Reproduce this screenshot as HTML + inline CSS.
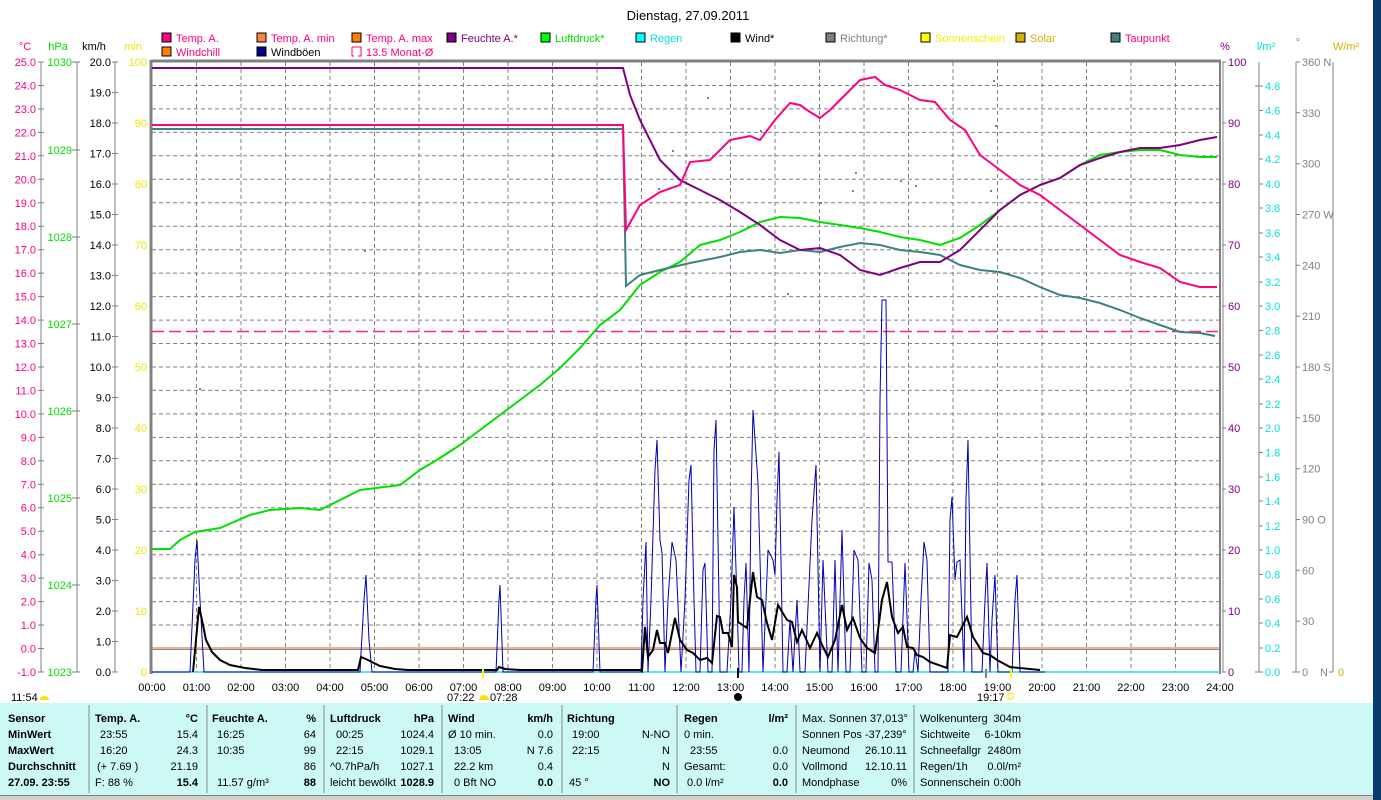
<!DOCTYPE html>
<html><head><meta charset="utf-8"><style>
html,body{margin:0;padding:0;width:1381px;height:800px;overflow:hidden;background:#fff}
svg{display:block;font-family:"Liberation Sans",sans-serif;font-size:11px}
</style></head><body>
<svg width="1381" height="800" viewBox="0 0 1381 800" xmlns="http://www.w3.org/2000/svg">
<rect x="0" y="0" width="1381" height="800" fill="#fff"/>
<rect x="1373" y="0" width="8" height="800" fill="#0b3a6e"/>
<text x="688" y="20" text-anchor="middle" font-size="13" fill="#000">Dienstag, 27.09.2011</text>

<g font-size="11">
<rect x="162" y="33" width="9" height="9" fill="#ff0080" stroke="#000"/><text x="176" y="42" fill="#ff0080">Temp. A.</text>
<rect x="257" y="33" width="9" height="9" fill="#ff8040" stroke="#000"/><text x="271" y="42" fill="#ff0080">Temp. A. min</text>
<rect x="352" y="33" width="9" height="9" fill="#ff8000" stroke="#000"/><text x="366" y="42" fill="#ff0080">Temp. A. max</text>
<rect x="447" y="33" width="9" height="9" fill="#800080" stroke="#000"/><text x="461" y="42" fill="#800080">Feuchte A.*</text>
<rect x="541" y="33" width="9" height="9" fill="#00ff00" stroke="#000"/><text x="555" y="42" fill="#00dd00">Luftdruck*</text>
<rect x="636" y="33" width="9" height="9" fill="#00ffff" stroke="#000"/><text x="650" y="42" fill="#00e0e0">Regen</text>
<rect x="731" y="33" width="9" height="9" fill="#000" stroke="#000"/><text x="745" y="42" fill="#000">Wind*</text>
<rect x="826" y="33" width="9" height="9" fill="#808080" stroke="#000"/><text x="840" y="42" fill="#808080">Richtung*</text>
<rect x="921" y="33" width="9" height="9" fill="#ffff00" stroke="#000"/><text x="935" y="42" fill="#f0f000">Sonnenschein</text>
<rect x="1016" y="33" width="9" height="9" fill="#d4b000" stroke="#000"/><text x="1030" y="42" fill="#d4b000">Solar</text>
<rect x="1111" y="33" width="9" height="9" fill="#408080" stroke="#000"/><text x="1125" y="42" fill="#ff0080">Taupunkt</text>
<rect x="162" y="47" width="9" height="9" fill="#ff8000" stroke="#000"/><text x="176" y="56" fill="#ff0080">Windchill</text>
<rect x="257" y="47" width="9" height="9" fill="#000090" stroke="#000"/><text x="271" y="56" fill="#000">Windböen</text>
<path d="M352 47h9v9h-3" fill="none" stroke="#ff0080"/><path d="M352 47v9h2" fill="none" stroke="#ff0080"/><text x="366" y="56" fill="#ff0080">13.5 Monat-Ø</text>
</g>

<text x="25" y="50" text-anchor="middle" fill="#ff0080">°C</text>
<text x="58" y="50" text-anchor="middle" fill="#00dd00">hPa</text>
<text x="94" y="50" text-anchor="middle" fill="#000">km/h</text>
<text x="133" y="50" text-anchor="middle" fill="#e8e800">min</text>
<text x="1225" y="50" text-anchor="middle" fill="#800080">%</text>
<text x="1266" y="50" text-anchor="middle" fill="#00e0e0">l/m²</text>
<text x="1298" y="46" text-anchor="middle" fill="#808080">°</text>
<text x="1346" y="50" text-anchor="middle" fill="#d4b000">W/m²</text>

<g stroke="#808080" stroke-width="1" fill="none">
<line x1="41" y1="62" x2="41" y2="672"/>
<line x1="77" y1="62" x2="77" y2="672"/>
<line x1="115" y1="62" x2="115" y2="672"/>
<line x1="1259" y1="62" x2="1259" y2="672"/>
<line x1="1296" y1="62" x2="1296" y2="672"/>
<line x1="1333" y1="62" x2="1333" y2="672"/>
</g>

<g stroke="#808080" stroke-dasharray="4,3" stroke-width="1">
<line x1="152" y1="85.5" x2="1220" y2="85.5"/><line x1="152" y1="108.9" x2="1220" y2="108.9"/><line x1="152" y1="132.4" x2="1220" y2="132.4"/><line x1="152" y1="155.8" x2="1220" y2="155.8"/><line x1="152" y1="179.3" x2="1220" y2="179.3"/><line x1="152" y1="202.8" x2="1220" y2="202.8"/><line x1="152" y1="226.2" x2="1220" y2="226.2"/><line x1="152" y1="249.7" x2="1220" y2="249.7"/><line x1="152" y1="273.1" x2="1220" y2="273.1"/><line x1="152" y1="296.6" x2="1220" y2="296.6"/><line x1="152" y1="320.1" x2="1220" y2="320.1"/><line x1="152" y1="343.5" x2="1220" y2="343.5"/><line x1="152" y1="367" x2="1220" y2="367"/><line x1="152" y1="390.4" x2="1220" y2="390.4"/><line x1="152" y1="413.9" x2="1220" y2="413.9"/><line x1="152" y1="437.4" x2="1220" y2="437.4"/><line x1="152" y1="460.8" x2="1220" y2="460.8"/><line x1="152" y1="484.3" x2="1220" y2="484.3"/><line x1="152" y1="507.7" x2="1220" y2="507.7"/><line x1="152" y1="531.2" x2="1220" y2="531.2"/><line x1="152" y1="554.7" x2="1220" y2="554.7"/><line x1="152" y1="578.1" x2="1220" y2="578.1"/><line x1="152" y1="601.6" x2="1220" y2="601.6"/><line x1="152" y1="625" x2="1220" y2="625"/>
<line x1="196.5" y1="62" x2="196.5" y2="672"/><line x1="241" y1="62" x2="241" y2="672"/><line x1="285.5" y1="62" x2="285.5" y2="672"/><line x1="330" y1="62" x2="330" y2="672"/><line x1="374.5" y1="62" x2="374.5" y2="672"/><line x1="419" y1="62" x2="419" y2="672"/><line x1="463.5" y1="62" x2="463.5" y2="672"/><line x1="508" y1="62" x2="508" y2="672"/><line x1="552.5" y1="62" x2="552.5" y2="672"/><line x1="597" y1="62" x2="597" y2="672"/><line x1="641.5" y1="62" x2="641.5" y2="672"/><line x1="686" y1="62" x2="686" y2="672"/><line x1="730.5" y1="62" x2="730.5" y2="672"/><line x1="775" y1="62" x2="775" y2="672"/><line x1="819.5" y1="62" x2="819.5" y2="672"/><line x1="864" y1="62" x2="864" y2="672"/><line x1="908.5" y1="62" x2="908.5" y2="672"/><line x1="953" y1="62" x2="953" y2="672"/><line x1="997.5" y1="62" x2="997.5" y2="672"/><line x1="1042" y1="62" x2="1042" y2="672"/><line x1="1086.5" y1="62" x2="1086.5" y2="672"/><line x1="1131" y1="62" x2="1131" y2="672"/><line x1="1175.5" y1="62" x2="1175.5" y2="672"/>
</g>

<g fill="#ff0080" text-anchor="end">
<text x="36" y="66">25.0</text><text x="36" y="89.5">24.0</text><text x="36" y="113">23.0</text><text x="36" y="136.4">22.0</text><text x="36" y="160">21.0</text><text x="36" y="183.3">20.0</text><text x="36" y="206.8">19.0</text><text x="36" y="230.2">18.0</text><text x="36" y="253.7">17.0</text><text x="36" y="277.1">16.0</text><text x="36" y="300.6">15.0</text><text x="36" y="324.1">14.0</text><text x="36" y="347.5">13.0</text><text x="36" y="371">12.0</text><text x="36" y="394.4">11.0</text><text x="36" y="418">10.0</text><text x="36" y="441.4">9.0</text><text x="36" y="464.8">8.0</text><text x="36" y="488.3">7.0</text><text x="36" y="511.7">6.0</text><text x="36" y="535.2">5.0</text><text x="36" y="558.7">4.0</text><text x="36" y="582.1">3.0</text><text x="36" y="605.6">2.0</text><text x="36" y="629">1.0</text><text x="36" y="652.5">0.0</text><text x="36" y="676">-1.0</text>
</g>
<g stroke="#808080"><path d="M38 62h6M38 85.5h6M38 109h6M38 132.4h6M38 155.8h6M38 179.3h6M38 202.8h6M38 226.2h6M38 249.7h6M38 273.1h6M38 296.6h6M38 320.1h6M38 343.5h6M38 367h6M38 390.4h6M38 413.9h6M38 437.4h6M38 460.8h6M38 484.3h6M38 507.7h6M38 531.2h6M38 554.7h6M38 578.1h6M38 601.6h6M38 625h6M38 648.5h6M38 672h6"/>
<path d="M72 62h8M72 150h8M72 237h8M72 324h8M72 411h8M72 498h8M72 585h8M72 672h8"/>
<path d="M112 62h6M112 92.5h6M112 123h6M112 153.5h6M112 184h6M112 214.5h6M112 245h6M112 275.5h6M112 306h6M112 336.5h6M112 367h6M112 397.5h6M112 428h6M112 458.5h6M112 489h6M112 519.5h6M112 550h6M112 580.5h6M112 611h6M112 641.5h6M112 672h6"/>
<path d="M1222 62h4M1222 123h4M1222 184h4M1222 245h4M1222 306h4M1222 367h4M1222 428h4M1222 489h4M1222 550h4M1222 611h4M1222 672h4"/>
<path d="M1255 86h8M1259 110.5h4M1259 135h4M1259 159h4M1259 184h4M1259 208h4M1259 233h4M1259 257h4M1259 282h4M1259 306h4M1259 330.5h4M1259 355h4M1259 379h4M1259 404h4M1259 428h4M1259 452.5h4M1259 477h4M1259 501h4M1259 526h4M1259 550h4M1259 574.5h4M1259 599h4M1259 623h4M1259 648h4M1255 672h8"/>
<path d="M1296 62h4M1296 112.8h4M1296 163.7h4M1296 214.5h4M1296 265.3h4M1296 316.2h4M1296 367h4M1296 417.8h4M1296 468.7h4M1296 519.5h4M1296 570.3h4M1296 621.2h4M1292 672h8M1329 672h4"/>
</g>
<g fill="#00dd00" text-anchor="end">
<text x="72" y="66">1030</text><text x="72" y="154">1029</text><text x="72" y="241">1028</text><text x="72" y="328">1027</text><text x="72" y="415">1026</text><text x="72" y="502">1025</text><text x="72" y="589">1024</text><text x="72" y="676">1023</text>
</g>
<g fill="#000" text-anchor="end">
<text x="111" y="66">20.0</text><text x="111" y="96.5">19.0</text><text x="111" y="127">18.0</text><text x="111" y="157.5">17.0</text><text x="111" y="188">16.0</text><text x="111" y="218.5">15.0</text><text x="111" y="249">14.0</text><text x="111" y="279.5">13.0</text><text x="111" y="310">12.0</text><text x="111" y="340.5">11.0</text><text x="111" y="371">10.0</text><text x="111" y="401.5">9.0</text><text x="111" y="432">8.0</text><text x="111" y="462.5">7.0</text><text x="111" y="493">6.0</text><text x="111" y="523.5">5.0</text><text x="111" y="554">4.0</text><text x="111" y="584.5">3.0</text><text x="111" y="615">2.0</text><text x="111" y="645.5">1.0</text><text x="111" y="676">0.0</text>
</g>
<g fill="#e8e800" text-anchor="end">
<text x="147" y="66">100</text><text x="147" y="127">90</text><text x="147" y="188">80</text><text x="147" y="249">70</text><text x="147" y="310">60</text><text x="147" y="371">50</text><text x="147" y="432">40</text><text x="147" y="493">30</text><text x="147" y="554">20</text><text x="147" y="615">10</text><text x="147" y="676">0</text>
</g>
<g fill="#800080">
<text x="1228" y="66">100</text><text x="1228" y="127">90</text><text x="1228" y="188">80</text><text x="1228" y="249">70</text><text x="1228" y="310">60</text><text x="1228" y="371">50</text><text x="1228" y="432">40</text><text x="1228" y="493">30</text><text x="1228" y="554">20</text><text x="1228" y="615">10</text><text x="1228" y="676">0</text>
</g>
<g fill="#00e0e0">
<text x="1265" y="90">4.8</text><text x="1265" y="114.5">4.6</text><text x="1265" y="139">4.4</text><text x="1265" y="163">4.2</text><text x="1265" y="188">4.0</text><text x="1265" y="212">3.8</text><text x="1265" y="237">3.6</text><text x="1265" y="261">3.4</text><text x="1265" y="286">3.2</text><text x="1265" y="310">3.0</text><text x="1265" y="334.5">2.8</text><text x="1265" y="359">2.6</text><text x="1265" y="383">2.4</text><text x="1265" y="408">2.2</text><text x="1265" y="432">2.0</text><text x="1265" y="456.5">1.8</text><text x="1265" y="481">1.6</text><text x="1265" y="505">1.4</text><text x="1265" y="530">1.2</text><text x="1265" y="554">1.0</text><text x="1265" y="578.5">0.8</text><text x="1265" y="603">0.6</text><text x="1265" y="627">0.4</text><text x="1265" y="652">0.2</text><text x="1265" y="676">0.0</text>
</g>
<g fill="#808080">
<text x="1302" y="66">360 N</text><text x="1302" y="116.8">330</text><text x="1302" y="167.7">300</text><text x="1302" y="218.5">270 W</text><text x="1302" y="269.3">240</text><text x="1302" y="320.2">210</text><text x="1302" y="371">180 S</text><text x="1302" y="421.8">150</text><text x="1302" y="472.7">120</text><text x="1302" y="523.5">90  O</text><text x="1302" y="574.3">60</text><text x="1302" y="625.2">30</text><text x="1302" y="676">0</text><text x="1320" y="676">N</text>
</g>
<text x="1338" y="676" fill="#d4b000">0</text>

<line x1="151" y1="61" x2="1221" y2="61" stroke="#808080" stroke-width="3"/>
<line x1="151" y1="60" x2="151" y2="674" stroke="#808080" stroke-width="3"/>
<line x1="1220" y1="60" x2="1220" y2="674" stroke="#808080" stroke-width="2"/>
<line x1="1223" y1="62" x2="1223" y2="672" stroke="#808080" stroke-width="1"/>
<line x1="152" y1="648" x2="1220" y2="648" stroke="#808080" stroke-width="1"/>
<line x1="152" y1="649.5" x2="1220" y2="649.5" stroke="#e07020" stroke-width="1"/>
<line x1="152" y1="672" x2="1220" y2="672" stroke="#20e0e0" stroke-width="1.5"/>
<line x1="152" y1="331.5" x2="1220" y2="331.5" stroke="#ff2090" stroke-width="1.5" stroke-dasharray="12,5"/>

<g fill="#808080">
<rect x="364" y="250" width="2" height="2"/><rect x="199" y="388" width="2" height="2"/><rect x="672" y="150" width="2" height="2"/><rect x="760" y="130" width="2" height="2"/><rect x="852" y="190" width="2" height="2"/><rect x="855" y="172" width="2" height="2"/><rect x="900" y="180" width="2" height="2"/><rect x="915" y="185" width="2" height="2"/><rect x="993" y="80" width="2" height="2"/><rect x="995" y="125" width="2" height="2"/><rect x="787" y="293" width="2" height="2"/><rect x="990" y="190" width="2" height="2"/><rect x="707" y="97" width="2" height="2"/><rect x="658" y="188" width="2" height="2"/><rect x="820" y="202" width="2" height="2"/>
</g>

<polyline fill="none" stroke="#0000b0" stroke-width="1" points="152,672 190,672 195,560 197,540 200,600 204,672 360,672 364,600 366,575 369,640 372,672 496,672 499,600 500,585 503,672 593,672 596,600 597,585 600,672 641,672 643,600 646,542 648,672 651,600 655,470 657,440 660,540 662,553 665,672 668,600 672,542 676,560 681,672 685,600 689,480 691,465 694,600 696,672 700,672 703,570 705,563 708,672 712,672 714,450 716,420 719,600 720,672 724,672 727,672 731,600 734,507 737,600 739,672 742,672 744,600 746,563 749,672 751,500 753,410 758,483 763,672 766,600 768,550 773,560 775,575 777,500 779,452 783,672 787,672 790,620 793,672 797,600 800,672 805,672 812,520 816,465 820,672 823,560 828,672 832,672 835,560 838,672 842,530 846,672 850,672 854,550 858,560 862,672 866,672 869,563 872,580 875,672 878,672 880,400 882,300 886,300 888,562 892,562 896,672 901,672 905,563 909,672 913,672 915,650 918,672 921,600 924,542 927,560 930,672 936,672 942,672 948,672 950,520 952,497 955,580 957,562 960,560 964,672 966,500 968,440 972,672 976,672 982,672 985,600 987,563 990,672 992,620 995,575 998,672 1012,672 1015,600 1017,575 1020,672 1045,672"/>

<polyline fill="none" stroke="#000" stroke-width="2" points="193,672 196,640 199,607 202,620 206,640 212,652 220,660 230,665 245,668 262,670 358,670 361,657 368,660 380,666 395,669 408,670 497,670 499,667 505,669 520,670 641,670 642,671 645,627 648,657 653,650 657,630 660,643 665,643 668,653 675,618 680,640 687,650 693,653 700,660 707,658 712,663 717,616 720,617 723,633 728,633 732,647 734,575 737,587 738,622 747,628 753,572 757,597 762,600 767,623 772,640 778,605 787,620 792,622 797,642 802,630 810,648 817,633 823,647 828,657 835,640 842,605 847,630 853,618 860,638 867,648 875,653 882,600 887,582 892,617 898,633 903,627 907,647 913,648 917,655 923,657 930,662 947,668 950,635 957,637 967,617 973,637 983,653 990,655 997,660 1010,667 1040,670"/>

<polyline fill="none" stroke="#00e000" stroke-width="2" points="152,549 170,549 180,540 195,532 220,528 250,515 270,510 300,508 320,510 340,500 360,490 400,485 420,470 440,458 460,445 480,430 500,415 520,400 540,385 560,368 580,348 600,325 620,310 640,285 660,272 680,262 700,245 720,240 740,232 760,222 780,217 800,218 820,222 840,225 860,228 880,232 900,237 920,240 940,245 960,238 980,225 1000,210 1020,195 1040,185 1060,178 1080,165 1100,155 1120,152 1140,150 1160,150 1180,155 1200,157 1217,157"/>

<polyline fill="none" stroke="#408080" stroke-width="2" points="152,129 623,129 626,286 640,275 660,270 690,263 720,257 740,252 760,250 780,253 800,250 820,252 840,247 860,243 880,245 900,250 920,252 940,255 960,265 980,270 1000,272 1020,278 1040,287 1060,295 1080,298 1100,303 1120,310 1140,318 1160,325 1180,332 1200,333 1215,336"/>

<polyline fill="none" stroke="#800080" stroke-width="2" points="152,68 623,68 630,95 640,120 660,160 680,180 700,190 720,200 740,212 760,225 780,240 800,250 820,248 840,255 860,270 880,275 900,268 920,262 940,262 960,250 980,230 1000,210 1020,195 1040,185 1060,178 1080,165 1100,158 1120,152 1140,148 1160,148 1180,145 1200,140 1217,137"/>

<polyline fill="none" stroke="#ff0080" stroke-width="2" points="152,125 623,125 626,230 640,205 660,192 680,185 690,162 710,160 730,140 750,136 760,140 775,120 790,103 800,105 810,112 820,118 830,110 840,100 860,80 875,77 885,85 900,90 920,100 935,102 950,120 965,130 980,155 1000,170 1020,185 1040,195 1060,210 1080,225 1100,240 1120,255 1140,262 1160,268 1180,282 1200,287 1217,287"/>

<rect x="482" y="669" width="2" height="9" fill="#ffff00"/>
<rect x="737" y="668" width="2" height="10" fill="#000"/>
<rect x="985" y="669" width="2" height="9" fill="#808080"/>
<rect x="1010" y="669" width="2" height="9" fill="#ffff00"/>

<g fill="#000" text-anchor="middle">
<text x="152" y="691">00:00</text><text x="196.5" y="691">01:00</text><text x="241" y="691">02:00</text><text x="285.5" y="691">03:00</text><text x="330" y="691">04:00</text><text x="374.5" y="691">05:00</text><text x="419" y="691">06:00</text><text x="463.5" y="691">07:00</text><text x="508" y="691">08:00</text><text x="552.5" y="691">09:00</text><text x="597" y="691">10:00</text><text x="641.5" y="691">11:00</text><text x="686" y="691">12:00</text><text x="730.5" y="691">13:00</text><text x="775" y="691">14:00</text><text x="819.5" y="691">15:00</text><text x="864" y="691">16:00</text><text x="908.5" y="691">17:00</text><text x="953" y="691">18:00</text><text x="997.5" y="691">19:00</text><text x="1042" y="691">20:00</text><text x="1086.5" y="691">21:00</text><text x="1131" y="691">22:00</text><text x="1175.5" y="691">23:00</text><text x="1220" y="691">24:00</text>
</g>
<text x="447" y="701" fill="#000">07:22</text><text x="490" y="701" fill="#000">07:28</text>
<path d="M479 700 a5 5 0 0 1 10 0z" fill="#ffe000"/>
<text x="977" y="701" fill="#000">19:17</text><rect x="1008" y="693" width="5" height="6" fill="none" stroke="#ffe000"/>
<circle cx="738" cy="697" r="4" fill="#000"/>
<text x="11" y="701" fill="#000">11:54</text><path d="M40 700 a4.5 4 0 0 1 9 0z" fill="#ffe000"/>

<rect x="0" y="703" width="1373" height="92" fill="#ccf8f6"/>
<rect x="0" y="795" width="1373" height="5" fill="#d4d0c8"/>
<line x1="0" y1="795.5" x2="1373" y2="795.5" stroke="#808080"/>
<g stroke="#8a8a8a"><line x1="89" y1="705" x2="89" y2="793"/><line x1="207" y1="705" x2="207" y2="793"/><line x1="324" y1="705" x2="324" y2="793"/><line x1="442" y1="705" x2="442" y2="793"/><line x1="562" y1="705" x2="562" y2="793"/><line x1="677" y1="705" x2="677" y2="793"/><line x1="796" y1="705" x2="796" y2="793"/><line x1="914" y1="705" x2="914" y2="793"/></g>
<g fill="#000" font-size="11">
<g font-weight="bold"><text x="8" y="722">Sensor</text><text x="8" y="738">MinWert</text><text x="8" y="754">MaxWert</text><text x="8" y="770">Durchschnitt</text><text x="8" y="786">27.09. 23:55</text>
<text x="95" y="722">Temp. A.</text><text x="198" y="722" text-anchor="end">°C</text>
<text x="212" y="722">Feuchte A.</text><text x="316" y="722" text-anchor="end">%</text>
<text x="330" y="722">Luftdruck</text><text x="434" y="722" text-anchor="end">hPa</text>
<text x="448" y="722">Wind</text><text x="553" y="722" text-anchor="end">km/h</text>
<text x="567" y="722">Richtung</text>
<text x="684" y="722">Regen</text><text x="788" y="722" text-anchor="end">l/m²</text>
<text x="198" y="786" text-anchor="end">15.4</text><text x="316" y="786" text-anchor="end">88</text><text x="434" y="786" text-anchor="end">1028.9</text><text x="553" y="786" text-anchor="end">0.0</text><text x="670" y="786" text-anchor="end">NO</text><text x="788" y="786" text-anchor="end">0.0</text></g>
<text x="100" y="738">23:55</text><text x="198" y="738" text-anchor="end">15.4</text>
<text x="100" y="754">16:20</text><text x="198" y="754" text-anchor="end">24.3</text>
<text x="97" y="770">(+ 7.69 )</text><text x="198" y="770" text-anchor="end">21.19</text>
<text x="95" y="786">F: 88 %</text>
<text x="217" y="738">16:25</text><text x="316" y="738" text-anchor="end">64</text>
<text x="217" y="754">10:35</text><text x="316" y="754" text-anchor="end">99</text>
<text x="316" y="770" text-anchor="end">86</text>
<text x="217" y="786">11.57 g/m³</text>
<text x="336" y="738">00:25</text><text x="434" y="738" text-anchor="end">1024.4</text>
<text x="336" y="754">22:15</text><text x="434" y="754" text-anchor="end">1029.1</text>
<text x="330" y="770">^0.7hPa/h</text><text x="434" y="770" text-anchor="end">1027.1</text>
<text x="330" y="786">leicht bewölkt</text>
<text x="448" y="738">Ø 10 min.</text><text x="553" y="738" text-anchor="end">0.0</text>
<text x="454" y="754">13:05</text><text x="553" y="754" text-anchor="end">N 7.6</text>
<text x="454" y="770">22.2 km</text><text x="553" y="770" text-anchor="end">0.4</text>
<text x="454" y="786">0 Bft NO</text>
<text x="572" y="738">19:00</text><text x="670" y="738" text-anchor="end">N-NO</text>
<text x="572" y="754">22:15</text><text x="670" y="754" text-anchor="end">N</text>
<text x="670" y="770" text-anchor="end">N</text>
<text x="569" y="786">45 °</text>
<text x="684" y="738">0 min.</text>
<text x="690" y="754">23:55</text><text x="788" y="754" text-anchor="end">0.0</text>
<text x="684" y="770">Gesamt:</text><text x="788" y="770" text-anchor="end">0.0</text>
<text x="687" y="786">0.0 l/m²</text>
<text x="802" y="722">Max. Sonnen 37,013°</text>
<text x="802" y="738">Sonnen Pos  -37,239°</text>
<text x="802" y="754">Neumond</text><text x="907" y="754" text-anchor="end">26.10.11</text>
<text x="802" y="770">Vollmond</text><text x="907" y="770" text-anchor="end">12.10.11</text>
<text x="802" y="786">Mondphase</text><text x="907" y="786" text-anchor="end">0%</text>
<text x="920" y="722">Wolkenunterg</text><text x="1021" y="722" text-anchor="end">304m</text>
<text x="920" y="738">Sichtweite</text><text x="1021" y="738" text-anchor="end">6-10km</text>
<text x="920" y="754">Schneefallgr</text><text x="1021" y="754" text-anchor="end">2480m</text>
<text x="920" y="770">Regen/1h</text><text x="1021" y="770" text-anchor="end">0.0l/m²</text>
<text x="920" y="786">Sonnenschein</text><text x="1021" y="786" text-anchor="end">0:00h</text>
</g>
</svg>
</body></html>
